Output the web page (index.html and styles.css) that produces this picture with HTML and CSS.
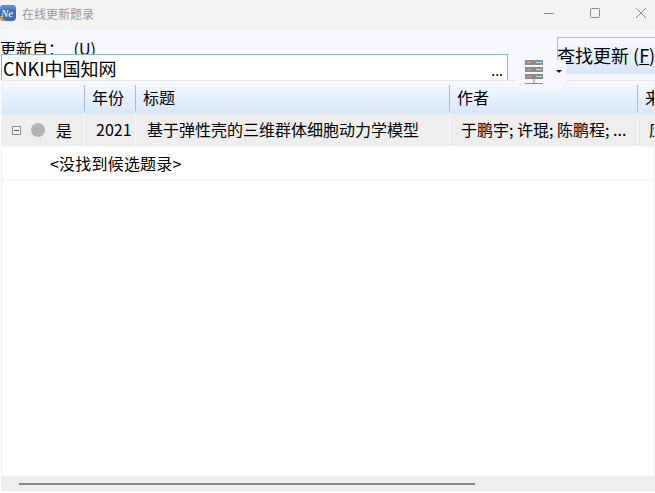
FILE: index.html
```html
<!DOCTYPE html>
<html lang="zh-CN">
<head>
  <meta charset="UTF-8" />
  <title>在线更新题录</title>
  <link rel="stylesheet" href="styles.css">
</head>
<body>

<div class="titlebar">
  <svg class="logo" width="16" height="16" viewBox="0 0 16 16">
    <rect width="16" height="16" rx="4" fill="#3f6cb4"/>
    <path d="M0 11 Q3 13 6 16 L4 16 Q0 16 0 12 Z" fill="#e8912d"/>
    <path d="M0 5 Q8 2 16 5 L16 4 Q16 0 12 0 L4 0 Q0 0 0 4 Z" fill="#5f8bd0"/>
    <text x="1" y="12" class="logo-text">Ne</text>
  </svg>
  <span class="title">在线更新题录</span>
  <div class="win-buttons">
    <svg width="10" height="10" viewBox="0 0 10 10"><path d="M0 5.5 H10" stroke="#8a8a8a"/></svg>
    <svg width="10" height="10" viewBox="0 0 10 10"><rect x="0.5" y="0.5" width="9" height="9" rx="1" fill="none" stroke="#8a8a8a"/></svg>
    <svg width="10" height="10" viewBox="0 0 10 10"><path d="M0 0 L10 10 M10 0 L0 10" stroke="#8a8a8a"/></svg>
  </div>
</div>

<div class="toolbar">
  <div class="source-label">更新自： (U)</div>
  <div class="source-input">
    <span>CNKI中国知网</span>
    <span class="more">...</span>
  </div>
  <button class="find-btn">查找更新 (<u>F</u>)</button>
  <div class="server-pop">
    <svg width="18" height="24" viewBox="0 0 18 24">
      <rect x="0" y="0" width="18" height="5" fill="#8b8b8b"/>
      <rect x="0" y="7" width="18" height="5" fill="#8b8b8b"/>
      <rect x="0" y="14" width="18" height="5" fill="#8b8b8b"/>
      <rect x="2" y="2" width="4" height="1" fill="#d9b48a"/>
      <rect x="2" y="9" width="4" height="1" fill="#d9b48a"/>
      <rect x="2" y="16" width="4" height="1" fill="#d9b48a"/>
      <rect x="11" y="2" width="6" height="1" fill="#a8e4ee"/>
      <rect x="11" y="9" width="6" height="1" fill="#a8e4ee"/>
      <rect x="11" y="16" width="6" height="1" fill="#a8e4ee"/>
      <path d="M9 19 V23" stroke="#8b8b8b"/>
      <path d="M0 23.5 H18" stroke="#8b8b8b"/>
    </svg>
    <span class="caret"></span>
  </div>
</div>

<div class="grid-wrap">
  <div class="row head">
    <div class="cell"></div>
    <div class="cell">年份</div>
    <div class="cell">标题</div>
    <div class="cell">作者</div>
    <div class="cell">来源</div>
  </div>
  <div class="row item">
    <div class="cell first">
      <span class="minus"></span>
      <span class="dot"></span>
      <span>是</span>
    </div>
    <div class="cell">2021</div>
    <div class="cell">基于弹性壳的三维群体细胞动力学模型</div>
    <div class="cell">于鹏宇; 许琨; 陈鹏程; ...</div>
    <div class="cell">应用</div>
  </div>
  <div class="empty-row">&lt;没找到候选题录&gt;</div>
  <div class="spacer"></div>
  <div class="hscroll"><div class="thumb"></div></div>
</div>

</body>
</html>
```

FILE: styles.css
```css
* {
  box-sizing: border-box;
}
html, body {
  height: 100%;
}
body {
  margin: 0;
  display: flex;
  flex-direction: column;
  overflow: hidden;
  background: #fff;
  color: #000;
  font-family: "Noto Sans CJK SC", "Noto Sans", sans-serif;
  font-size: 16px;
}
.titlebar {
  height: 29px;
  flex: none;
  display: flex;
  align-items: center;
  background: #f3f3f3;
}
.logo {
  margin-top: -3px;
}
.logo-text {
  font-family: "Liberation Serif", serif;
  font-style: italic;
  font-size: 11px;
  fill: #fff;
}
.title {
  margin-left: 6px;
  margin-top: -3px;
  font-size: 12px;
  color: #999;
}
.win-buttons {
  margin-left: auto;
  margin-right: 9px;
  margin-top: -3px;
  display: flex;
  gap: 36px;
}
.toolbar {
  position: relative;
  height: 51px;
  flex: none;
  display: grid;
  grid-template-columns: 508px 49px 98px;
  grid-template-rows: 25px 26px;
  background: #f5f8fe;
}
.source-label {
  grid-column: 1;
  grid-row: 1;
  overflow: hidden;
  line-height: 24px;
  padding-top: 7px;
  height: 25px;
  word-spacing: 6px;
}
.source-input {
  grid-column: 1;
  grid-row: 2;
  margin-left: 1px;
  display: flex;
  align-items: center;
  justify-content: space-between;
  padding: 0 4px 0 1px;
  background: #fff;
  border: 1px solid #8fb0dc;
  border-bottom: none;
  font-size: 18px;
}
.more {
  font-size: 14px;
  align-self: flex-end;
  line-height: 20px;
}
.find-btn {
  grid-column: 3;
  grid-row: 1 / 3;
  height: 37px;
  margin-top: 8px;
  padding: 0 0 2px 0;
  text-align: left;
  text-indent: -1px;
  white-space: nowrap;
  overflow: hidden;
  border: 1px solid #a3bfe3;
  border-right: none;
  border-bottom-color: #dbe8fb;
  background: linear-gradient(#f8fbff, #d9e6fa);
  color: #000;
  font-family: inherit;
  font-size: 18px;
}
.server-pop {
  position: absolute;
  left: 515px;
  top: 31px;
  width: 51px;
  height: 30px;
  background: #f5f8fe;
  z-index: 2;
}
.server-pop svg {
  position: absolute;
  left: 10px;
  top: 0;
}
.caret {
  position: absolute;
  left: 41px;
  top: 10px;
  border-style: solid;
  border-width: 3px 3px 0 3px;
  border-color: #111 transparent transparent transparent;
}
.grid-wrap {
  flex: 1;
  display: flex;
  flex-direction: column;
  margin: 0 0 2px 1px;
  border-top: 1px solid #e6e6e6;
  border-left: 1px solid #eee;
  border-right: 1px solid #eee;
  overflow: hidden;
}
.row {
  display: grid;
  grid-template-columns: 82px 51px 314px 188px 1fr;
  flex: none;
}
.head {
  height: 33px;
  align-items: center;
  background: linear-gradient(#f7faff, #d8e6fa);
}
.head .cell {
  height: 26px;
  line-height: 25px;
  padding-left: 7px;
  border-left: 1px solid #a3bbdc;
  white-space: nowrap;
  overflow: hidden;
}
.head .cell:first-child {
  border-left: none;
}
.item {
  height: 33px;
  line-height: 31px;
  background: #eee;
  border-bottom: 1px dotted #fff;
}
.item .cell {
  padding-left: 11px;
  border-left: 1px dotted #fff;
  white-space: nowrap;
  overflow: hidden;
}
.item .cell.first {
  display: flex;
  align-items: center;
  padding-left: 10px;
  border-left: none;
}
.minus {
  position: relative;
  width: 9px;
  height: 9px;
  border: 1px solid #8c8c8c;
  background: #f4f6fa;
}
.minus::after {
  content: "";
  position: absolute;
  left: 1px;
  top: 3px;
  width: 5px;
  height: 1px;
  background: #555;
}
.dot {
  width: 14px;
  height: 14px;
  margin: 0 11px 0 10px;
  border-radius: 50%;
  background: #b4b4b4;
}
.empty-row {
  flex: none;
  height: 33px;
  line-height: 32px;
  padding-left: 48px;
  letter-spacing: 0.2px;
  border-bottom: 1px dotted #e8e8e8;
}
.spacer {
  flex: 1;
}
.hscroll {
  flex: none;
  height: 15px;
  display: flex;
  align-items: center;
  padding-left: 17px;
  background: #eee;
}
.thumb {
  width: 456px;
  height: 2px;
  background: #888;
}
```
